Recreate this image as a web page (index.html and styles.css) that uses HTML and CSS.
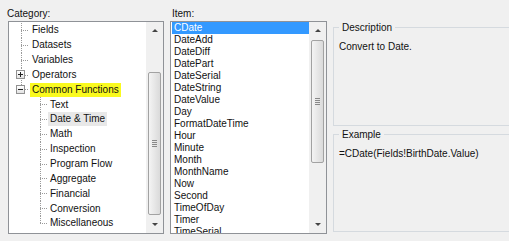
FILE: index.html
```html
<!doctype html>
<html lang="en">
  <head>
    <meta charset="UTF-8" />
    <title>Expression Functions</title>
    <link rel="stylesheet" href="styles.css">
  </head>
  <body>
    <div class="dialog">
      <!-- category tree -->
      <div class="col col-category">
        <div class="caption">Category:</div>
        <div class="listbox">
          <div class="tree-items">
            <div class="node"><span class="stem"></span><span class="label">Fields</span></div>
            <div class="node"><span class="stem"></span><span class="label">Datasets</span></div>
            <div class="node"><span class="stem"></span><span class="label">Variables</span></div>
            <div class="node">
              <span class="stem"><span class="expander plus"></span></span><span class="label">Operators</span>
            </div>
            <div class="node">
              <span class="stem last"><span class="expander"></span></span><span class="label marked">Common Functions</span>
            </div>
            <div class="node child"><span class="stem"></span><span class="label">Text</span></div>
            <div class="node child"><span class="stem"></span><span class="label current">Date &amp; Time</span></div>
            <div class="node child"><span class="stem"></span><span class="label">Math</span></div>
            <div class="node child"><span class="stem"></span><span class="label">Inspection</span></div>
            <div class="node child"><span class="stem"></span><span class="label">Program Flow</span></div>
            <div class="node child"><span class="stem"></span><span class="label">Aggregate</span></div>
            <div class="node child"><span class="stem"></span><span class="label">Financial</span></div>
            <div class="node child"><span class="stem"></span><span class="label">Conversion</span></div>
            <div class="node child"><span class="stem last"></span><span class="label">Miscellaneous</span></div>
          </div>
          <div class="scrollbar">
            <div class="sb-btn"><span class="arrow-up"></span></div>
            <div class="sb-track">
              <div class="sb-thumb tree-thumb"><span class="grip"></span></div>
            </div>
            <div class="sb-btn"><span class="arrow-down"></span></div>
          </div>
        </div>
      </div>

      <!-- function list -->
      <div class="col col-item">
        <div class="caption">Item:</div>
        <div class="listbox">
          <div class="items">
            <div class="item selected">CDate</div>
            <div class="item">DateAdd</div>
            <div class="item">DateDiff</div>
            <div class="item">DatePart</div>
            <div class="item">DateSerial</div>
            <div class="item">DateString</div>
            <div class="item">DateValue</div>
            <div class="item">Day</div>
            <div class="item">FormatDateTime</div>
            <div class="item">Hour</div>
            <div class="item">Minute</div>
            <div class="item">Month</div>
            <div class="item">MonthName</div>
            <div class="item">Now</div>
            <div class="item">Second</div>
            <div class="item">TimeOfDay</div>
            <div class="item">Timer</div>
            <div class="item">TimeSerial</div>
          </div>
          <div class="scrollbar">
            <div class="sb-btn"><span class="arrow-up"></span></div>
            <div class="sb-track">
              <div class="sb-thumb item-thumb"><span class="grip"></span></div>
            </div>
            <div class="sb-btn"><span class="arrow-down"></span></div>
          </div>
        </div>
      </div>

      <!-- description / example -->
      <div class="col col-info">
        <fieldset class="group group-desc">
          <legend>Description</legend>
          <p>Convert to Date.</p>
        </fieldset>
        <fieldset class="group group-example">
          <legend>Example</legend>
          <p>=CDate(Fields!BirthDate.Value)</p>
        </fieldset>
      </div>
    </div>
  </body>
</html>
```

FILE: styles.css
```css
body {
  margin: 0;
  background-color: #f0f0f0;
  color: #111;
  font-family: "Liberation Sans", Arial, sans-serif;
  font-size: 10px;
  overflow: hidden;
}

.dialog {
  display: flex;
  padding-left: 8px;
  height: 241px;
}

.col {
  display: flex;
  flex-direction: column;
  flex: none;
}

.col-category {
  width: 156px;
}

.col-item {
  width: 157px;
  margin-left: 6px;
}

.col-info {
  width: 200px;
  margin-left: 6px;
}

.caption {
  height: 21px;
  padding-top: 7px;
  box-sizing: border-box;
  line-height: 13px;
  margin-left: -1px;
}

.col-item .caption {
  margin-left: 2px;
}

.listbox {
  display: flex;
  height: 213px;
  box-sizing: border-box;
  border: 1px solid #8f9297;
  background-color: #fff;
}

/* tree */
.tree-items {
  flex: 1;
  padding-top: 1px;
  overflow: hidden;
}

.node {
  display: flex;
  align-items: center;
  height: 14.85px;
  white-space: nowrap;
}

.stem {
  display: flex;
  align-items: center;
  flex: none;
  width: 9px;
  height: 100%;
  margin-left: 12px;
  background-image:
    repeating-linear-gradient(to bottom, #9a9a9a 0 1px, transparent 1px 2px),
    repeating-linear-gradient(to right, #9a9a9a 0 1px, transparent 1px 2px);
  background-size: 1px 100%, 8px 1px;
  background-position: 0 0, 0 7px;
  background-repeat: no-repeat;
}

.stem.last {
  background-size: 1px 8px, 8px 1px;
}

.node.child .stem {
  margin-left: 31px;
  width: 8px;
  background-size: 1px 100%, 7px 1px;
}

.node.child .stem.last {
  background-size: 1px 8px, 7px 1px;
}

.expander {
  flex: none;
  width: 9px;
  height: 9px;
  margin-left: -5px;
  box-sizing: border-box;
  border: 1px solid #919191;
  background:
    linear-gradient(#222, #222) center / 5px 1px no-repeat,
    linear-gradient(#fff, #e2e2e2);
}

.expander.plus {
  background:
    linear-gradient(#222, #222) center / 5px 1px no-repeat,
    linear-gradient(#222, #222) center / 1px 5px no-repeat,
    linear-gradient(#fff, #e2e2e2);
}

.label {
  padding: 0 2px;
  line-height: 14px;
}

.label.marked {
  background-color: #fafa1e;
}

.label.current {
  background-color: #e8e8e8;
}

/* items */
.items {
  flex: 1;
  padding-left: 1px;
  overflow: hidden;
}

.item {
  height: 12px;
  line-height: 12px;
  padding-left: 2px;
  white-space: nowrap;
}

.item.selected {
  background-color: #3399ff;
  color: #fff;
}

/* scrollbars */
.scrollbar {
  display: flex;
  flex-direction: column;
  flex: none;
  width: 17px;
  background-color: #f0f0f0;
}

.sb-btn {
  display: flex;
  align-items: center;
  justify-content: center;
  height: 17px;
  flex: none;
}

.arrow-up,
.arrow-down {
  width: 0;
  height: 0;
  border-left: 3px solid transparent;
  border-right: 3px solid transparent;
}

.arrow-up {
  border-bottom: 3px solid #444;
}

.arrow-down {
  border-top: 3px solid #444;
}

.sb-track {
  flex: 1;
  padding: 0 2px;
}

.sb-thumb {
  display: flex;
  align-items: center;
  justify-content: center;
  box-sizing: border-box;
  border: 1px solid #a2a2a2;
  border-radius: 2px;
  background: linear-gradient(to right, #f4f4f4, #dadada);
}

.tree-thumb {
  margin-top: 33px;
  height: 143px;
}

.item-thumb {
  margin-top: 1px;
  height: 123px;
}

.grip {
  width: 5px;
  height: 7px;
  background: repeating-linear-gradient(to bottom, #888 0 1px, transparent 1px 2px);
}

/* group boxes */
.group {
  margin: 0;
  padding: 0 0 0 5px;
  box-sizing: border-box;
  border: 1px solid #d5dadf;
  min-inline-size: 0;
}

.group legend {
  padding: 0 3px;
  line-height: 13px;
}

.group p {
  margin: 0;
  padding-top: 7px;
  line-height: 12px;
  white-space: nowrap;
}

.group-desc {
  margin-top: 21px;
  height: 105px;
}

.group-example {
  margin-top: 2px;
  height: 104px;
}
```
